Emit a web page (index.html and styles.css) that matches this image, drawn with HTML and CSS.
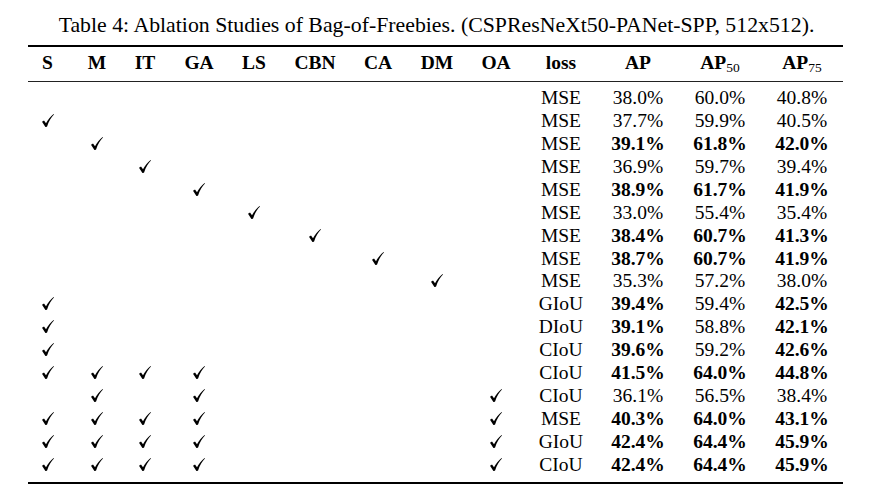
FILE: index.html
```html
<!DOCTYPE html>
<html>
<head>
<meta charset="utf-8">
<link rel="stylesheet" href="styles.css">
</head>
<body>
<div class="page">
  <div class="caption">Table 4: Ablation Studies of Bag-of-Freebies. (CSPResNeXt50-PANet-SPP, 512x512).</div>
  <table class="tbl">
    <colgroup>
      <col class="c1"><col class="c2"><col class="c3"><col class="c4"><col class="c5"><col class="c6"><col class="c7"><col class="c8"><col class="c9"><col class="c10"><col class="c11"><col class="c12"><col class="c13">
    </colgroup>
    <thead>
      <tr>
        <th>S</th><th>M</th><th>IT</th><th>GA</th><th>LS</th><th>CBN</th><th>CA</th><th>DM</th><th>OA</th><th>loss</th><th>AP</th><th>AP<sub>50</sub></th><th class="last">AP<sub>75</sub></th>
      </tr>
    </thead>
    <tbody id="rows"></tbody>
  </table>
</div>
<script src="script.js"></script>
</body>
</html>
```
FILE: script.js
```js
const rows = [
  ["", "MSE", "38.0", "60.0", "40.8", ""],
  ["S", "MSE", "37.7", "59.9", "40.5", ""],
  ["M", "MSE", "39.1", "61.8", "42.0", "bbb"],
  ["IT", "MSE", "36.9", "59.7", "39.4", ""],
  ["GA", "MSE", "38.9", "61.7", "41.9", "bbb"],
  ["LS", "MSE", "33.0", "55.4", "35.4", ""],
  ["CBN", "MSE", "38.4", "60.7", "41.3", "bbb"],
  ["CA", "MSE", "38.7", "60.7", "41.9", "bbb"],
  ["DM", "MSE", "35.3", "57.2", "38.0", ""],
  ["S", "GIoU", "39.4", "59.4", "42.5", "b-b"],
  ["S", "DIoU", "39.1", "58.8", "42.1", "b-b"],
  ["S", "CIoU", "39.6", "59.2", "42.6", "b-b"],
  ["S M IT GA", "CIoU", "41.5", "64.0", "44.8", "bbb"],
  ["M GA OA", "CIoU", "36.1", "56.5", "38.4", ""],
  ["S M IT GA OA", "MSE", "40.3", "64.0", "43.1", "bbb"],
  ["S M IT GA OA", "GIoU", "42.4", "64.4", "45.9", "bbb"],
  ["S M IT GA OA", "CIoU", "42.4", "64.4", "45.9", "bbb"]
];
const cols = ["S", "M", "IT", "GA", "LS", "CBN", "CA", "DM", "OA"];
const check = '<svg class="chk" viewBox="0 0 12 13" width="12" height="13"><path d="M0 7.8 L2 6.6 L4 9.3 C5.8 5.8 8.6 2.3 11.6 0 L12 0.6 C9.3 3.2 6.8 7 5 12.8 L3.4 13 Z"/></svg>';
const body = document.getElementById("rows");
let html = "";
for (const r of rows) {
  const on = r[0].split(" ");
  html += "<tr>";
  for (const c of cols) html += "<td>" + (on.includes(c) ? check : "") + "</td>";
  html += "<td>" + r[1] + "</td>";
  for (let i = 0; i < 3; i++) {
    const b = r[5][i] === "b";
    html += "<td" + (i === 2 ? ' class="last' + (b ? ' bold' : '') + '"' : (b ? ' class="bold"' : '')) + ">" + r[2 + i] + "%</td>";
  }
  html += "</tr>";
}
body.innerHTML = html;
```
FILE: styles.css
```css
html, body {
  margin: 0;
  padding: 0;
  background: #fff;
}
body {
  font-family: "Liberation Serif", "Times New Roman", serif;
  color: #000;
}
.page {
  padding-top: 13px;
  display: flex;
  flex-direction: column;
}
.caption {
  font-size: 21.8px;
  line-height: 24px;
  text-align: center;
  width: 873px;
  margin-bottom: 8px;
}
.tbl {
  margin-left: 28px;
  width: 815px;
  table-layout: fixed;
  border-collapse: collapse;
  border-top: 2px solid #000;
  border-bottom: 2px solid #000;
  font-size: 19.5px;
}
.c1 { width: 39px; }
.c2 { width: 60px; }
.c3 { width: 36px; }
.c4 { width: 72px; }
.c5 { width: 38px; }
.c6 { width: 84px; }
.c7 { width: 42px; }
.c8 { width: 76px; }
.c9 { width: 42px; }
.c10 { width: 88px; }
.c11 { width: 66px; }
.c12 { width: 98px; }
.c13 { width: 74px; }
.tbl th, .tbl td {
  padding: 0;
  text-align: center;
  line-height: 22.94px;
  white-space: nowrap;
}
.tbl th {
  font-weight: bold;
  padding-top: 5px;
  padding-bottom: 6px;
  border-bottom: 1px solid #222;
}
.tbl .last {
  padding-right: 8px;
}
.tbl sub {
  font-weight: normal;
  font-size: 13.5px;
  line-height: 0;
  vertical-align: -3px;
}
.tbl tbody tr:first-child td {
  padding-top: 5px;
}
.tbl tbody tr:last-child td {
  padding-bottom: 5px;
}
.tbl td.bold {
  font-weight: bold;
}
.chk {
  display: inline-block;
  vertical-align: baseline;
  fill: #000;
}
```
